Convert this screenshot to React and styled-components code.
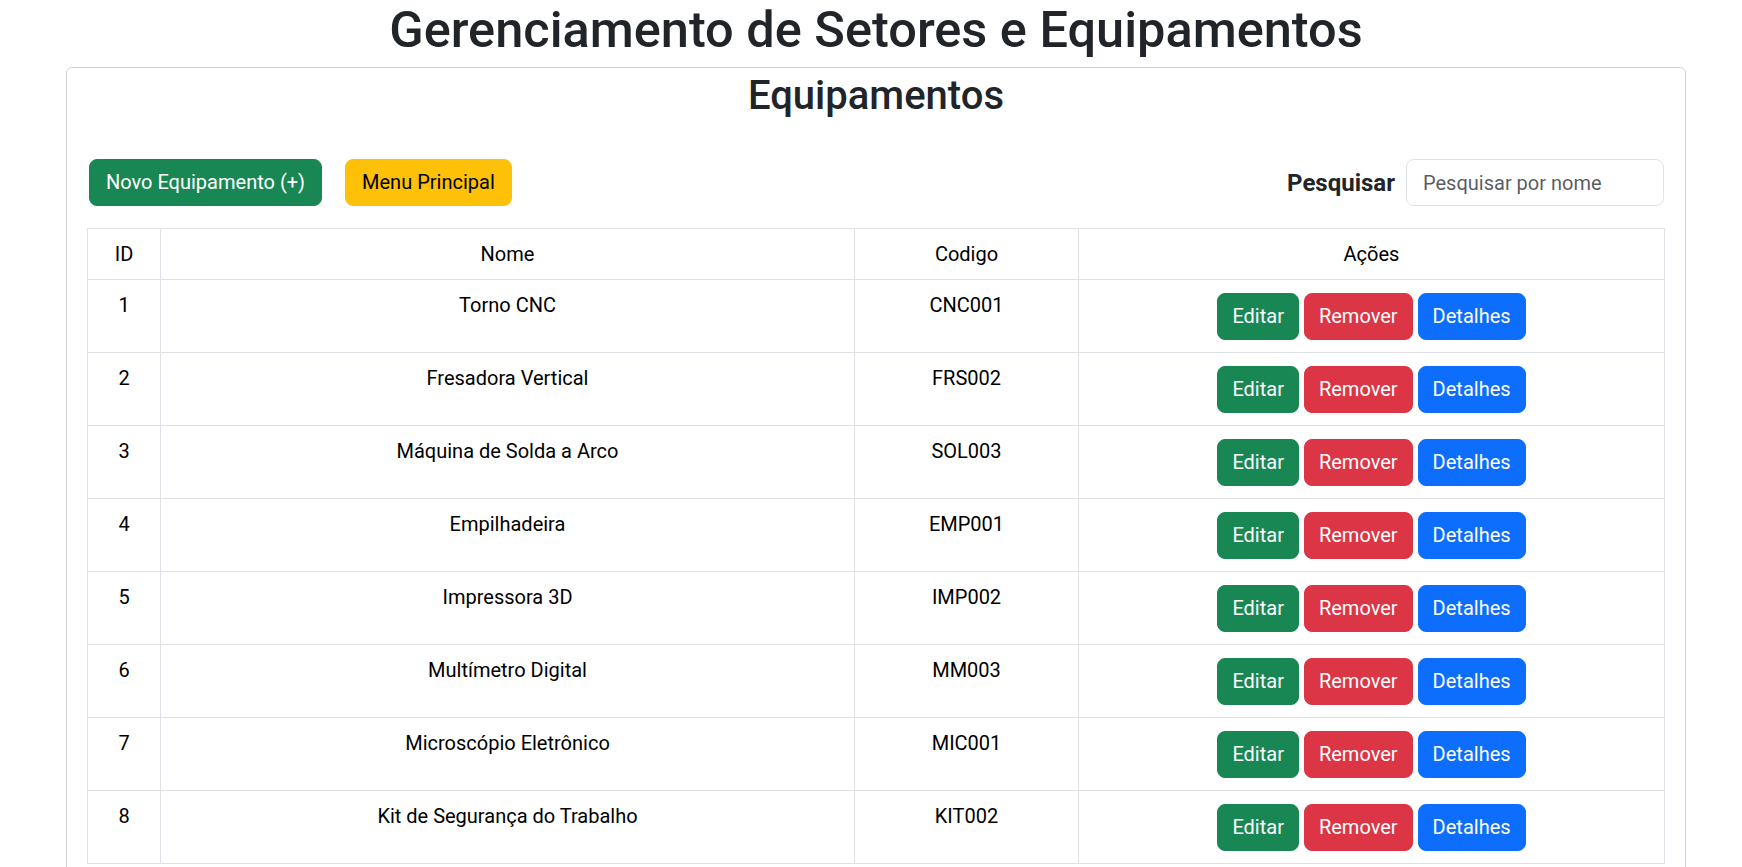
import React from "react";
import styled, { createGlobalStyle } from "styled-components";

const equipamentos = [
  { id: 1, nome: "Torno CNC", codigo: "CNC001" },
  { id: 2, nome: "Fresadora Vertical", codigo: "FRS002" },
  { id: 3, nome: "Máquina de Solda a Arco", codigo: "SOL003" },
  { id: 4, nome: "Empilhadeira", codigo: "EMP001" },
  { id: 5, nome: "Impressora 3D", codigo: "IMP002" },
  { id: 6, nome: "Multímetro Digital", codigo: "MM003" },
  { id: 7, nome: "Microscópio Eletrônico", codigo: "MIC001" },
  { id: 8, nome: "Kit de Segurança do Trabalho", codigo: "KIT002" },
];

const App = () => (
  <>
    <GlobalStyle />
    <Page>
      <Title>Gerenciamento de Setores e Equipamentos</Title>
      <Card>
        <CardTitle>Equipamentos</CardTitle>
        <Toolbar>
          <LeftActions>
            <Button $variant="success">Novo Equipamento (+)</Button>
            <Button $variant="warning">Menu Principal</Button>
          </LeftActions>
          <SearchGroup>
            <SearchLabel htmlFor="pesquisa">Pesquisar</SearchLabel>
            <SearchInput id="pesquisa" placeholder="Pesquisar por nome" />
          </SearchGroup>
        </Toolbar>
        <Table>
          <colgroup>
            <col style={{ width: 73 }} />
            <col style={{ width: 694 }} />
            <col style={{ width: 224 }} />
            <col style={{ width: 586 }} />
          </colgroup>
          <thead>
            <tr>
              <Th>ID</Th>
              <Th>Nome</Th>
              <Th>Codigo</Th>
              <Th>Ações</Th>
            </tr>
          </thead>
          <tbody>
            {equipamentos.map((eq) => (
              <tr key={eq.id}>
                <Td>{eq.id}</Td>
                <Td>{eq.nome}</Td>
                <Td>{eq.codigo}</Td>
                <ActionCell>
                  <ActionGroup>
                    <Button $variant="success" $compact>Editar</Button>
                    <Button $variant="danger" $compact>Remover</Button>
                    <Button $variant="primary" $compact>Detalhes</Button>
                  </ActionGroup>
                </ActionCell>
              </tr>
            ))}
          </tbody>
        </Table>
      </Card>
    </Page>
  </>
);

const variants = {
  success: { bg: "#198754", color: "#fff" },
  warning: { bg: "#ffc107", color: "#000" },
  danger: { bg: "#dc3545", color: "#fff" },
  primary: { bg: "#0d6efd", color: "#fff" },
};

const GlobalStyle = createGlobalStyle`
  body {
    margin: 0;
    font-family: Roboto, "Liberation Sans", sans-serif;
    color: #212529;
    background: #fff;
  }
`;

const Page = styled.div`
  margin: 0 56px 0 66px;
`;

const Title = styled.h1`
  margin: 0 0 7px;
  text-align: center;
  font-size: 50.5px;
  font-weight: 500;
  line-height: 60px;
`;

const Card = styled.div`
  border: 1px solid rgba(0, 0, 0, 0.175);
  border-radius: 6px;
  padding: 4px 20px 20px;
`;

const CardTitle = styled.h2`
  margin: 0;
  text-align: center;
  font-size: 40px;
  font-weight: 500;
  line-height: 48px;
`;

const Toolbar = styled.div`
  display: flex;
  justify-content: space-between;
  align-items: center;
  margin-top: 39px;
`;

const LeftActions = styled.div`
  display: flex;
  gap: 23px;
  padding-left: 2px;
`;

const Button = styled.button`
  font-family: inherit;
  font-size: 20px;
  line-height: 29px;
  padding: 8px ${({ $compact }) => ($compact ? "14px" : "16px")};
  border-radius: 8px;
  border: 1px solid ${({ $variant }) => variants[$variant].bg};
  background: ${({ $variant }) => variants[$variant].bg};
  color: ${({ $variant }) => variants[$variant].color};
  cursor: pointer;
  white-space: nowrap;
`;

const SearchGroup = styled.div`
  display: flex;
  align-items: center;
  gap: 11px;
  padding-right: 1px;
`;

const SearchLabel = styled.label`
  font-size: 24px;
  font-weight: 700;
`;

const SearchInput = styled.input`
  box-sizing: border-box;
  width: 258px;
  height: 47px;
  padding: 8px 16px;
  font-family: inherit;
  font-size: 20px;
  color: #212529;
  border: 1px solid #dee2e6;
  border-radius: 8px;
  outline: none;

  &::placeholder {
    color: rgba(33, 37, 41, 0.75);
  }
`;

const Table = styled.table`
  width: 100%;
  margin-top: 22px;
  table-layout: fixed;
  border-collapse: collapse;
  border: 1px solid #dee2e6;
`;

const Th = styled.th`
  border: 1px solid #dee2e6;
  padding: 10px 8px;
  font-size: 20px;
  font-weight: 400;
  line-height: 30px;
  color: #000;
  text-align: center;
`;

const Td = styled.td`
  border: 1px solid #dee2e6;
  padding: 10px 8px;
  font-size: 20px;
  line-height: 30px;
  color: #000;
  text-align: center;
  vertical-align: top;
`;

const ActionCell = styled(Td)`
  padding: 13px 8px 12px;
`;

const ActionGroup = styled.div`
  display: flex;
  justify-content: center;
  gap: 5px;
`;

export default App;
